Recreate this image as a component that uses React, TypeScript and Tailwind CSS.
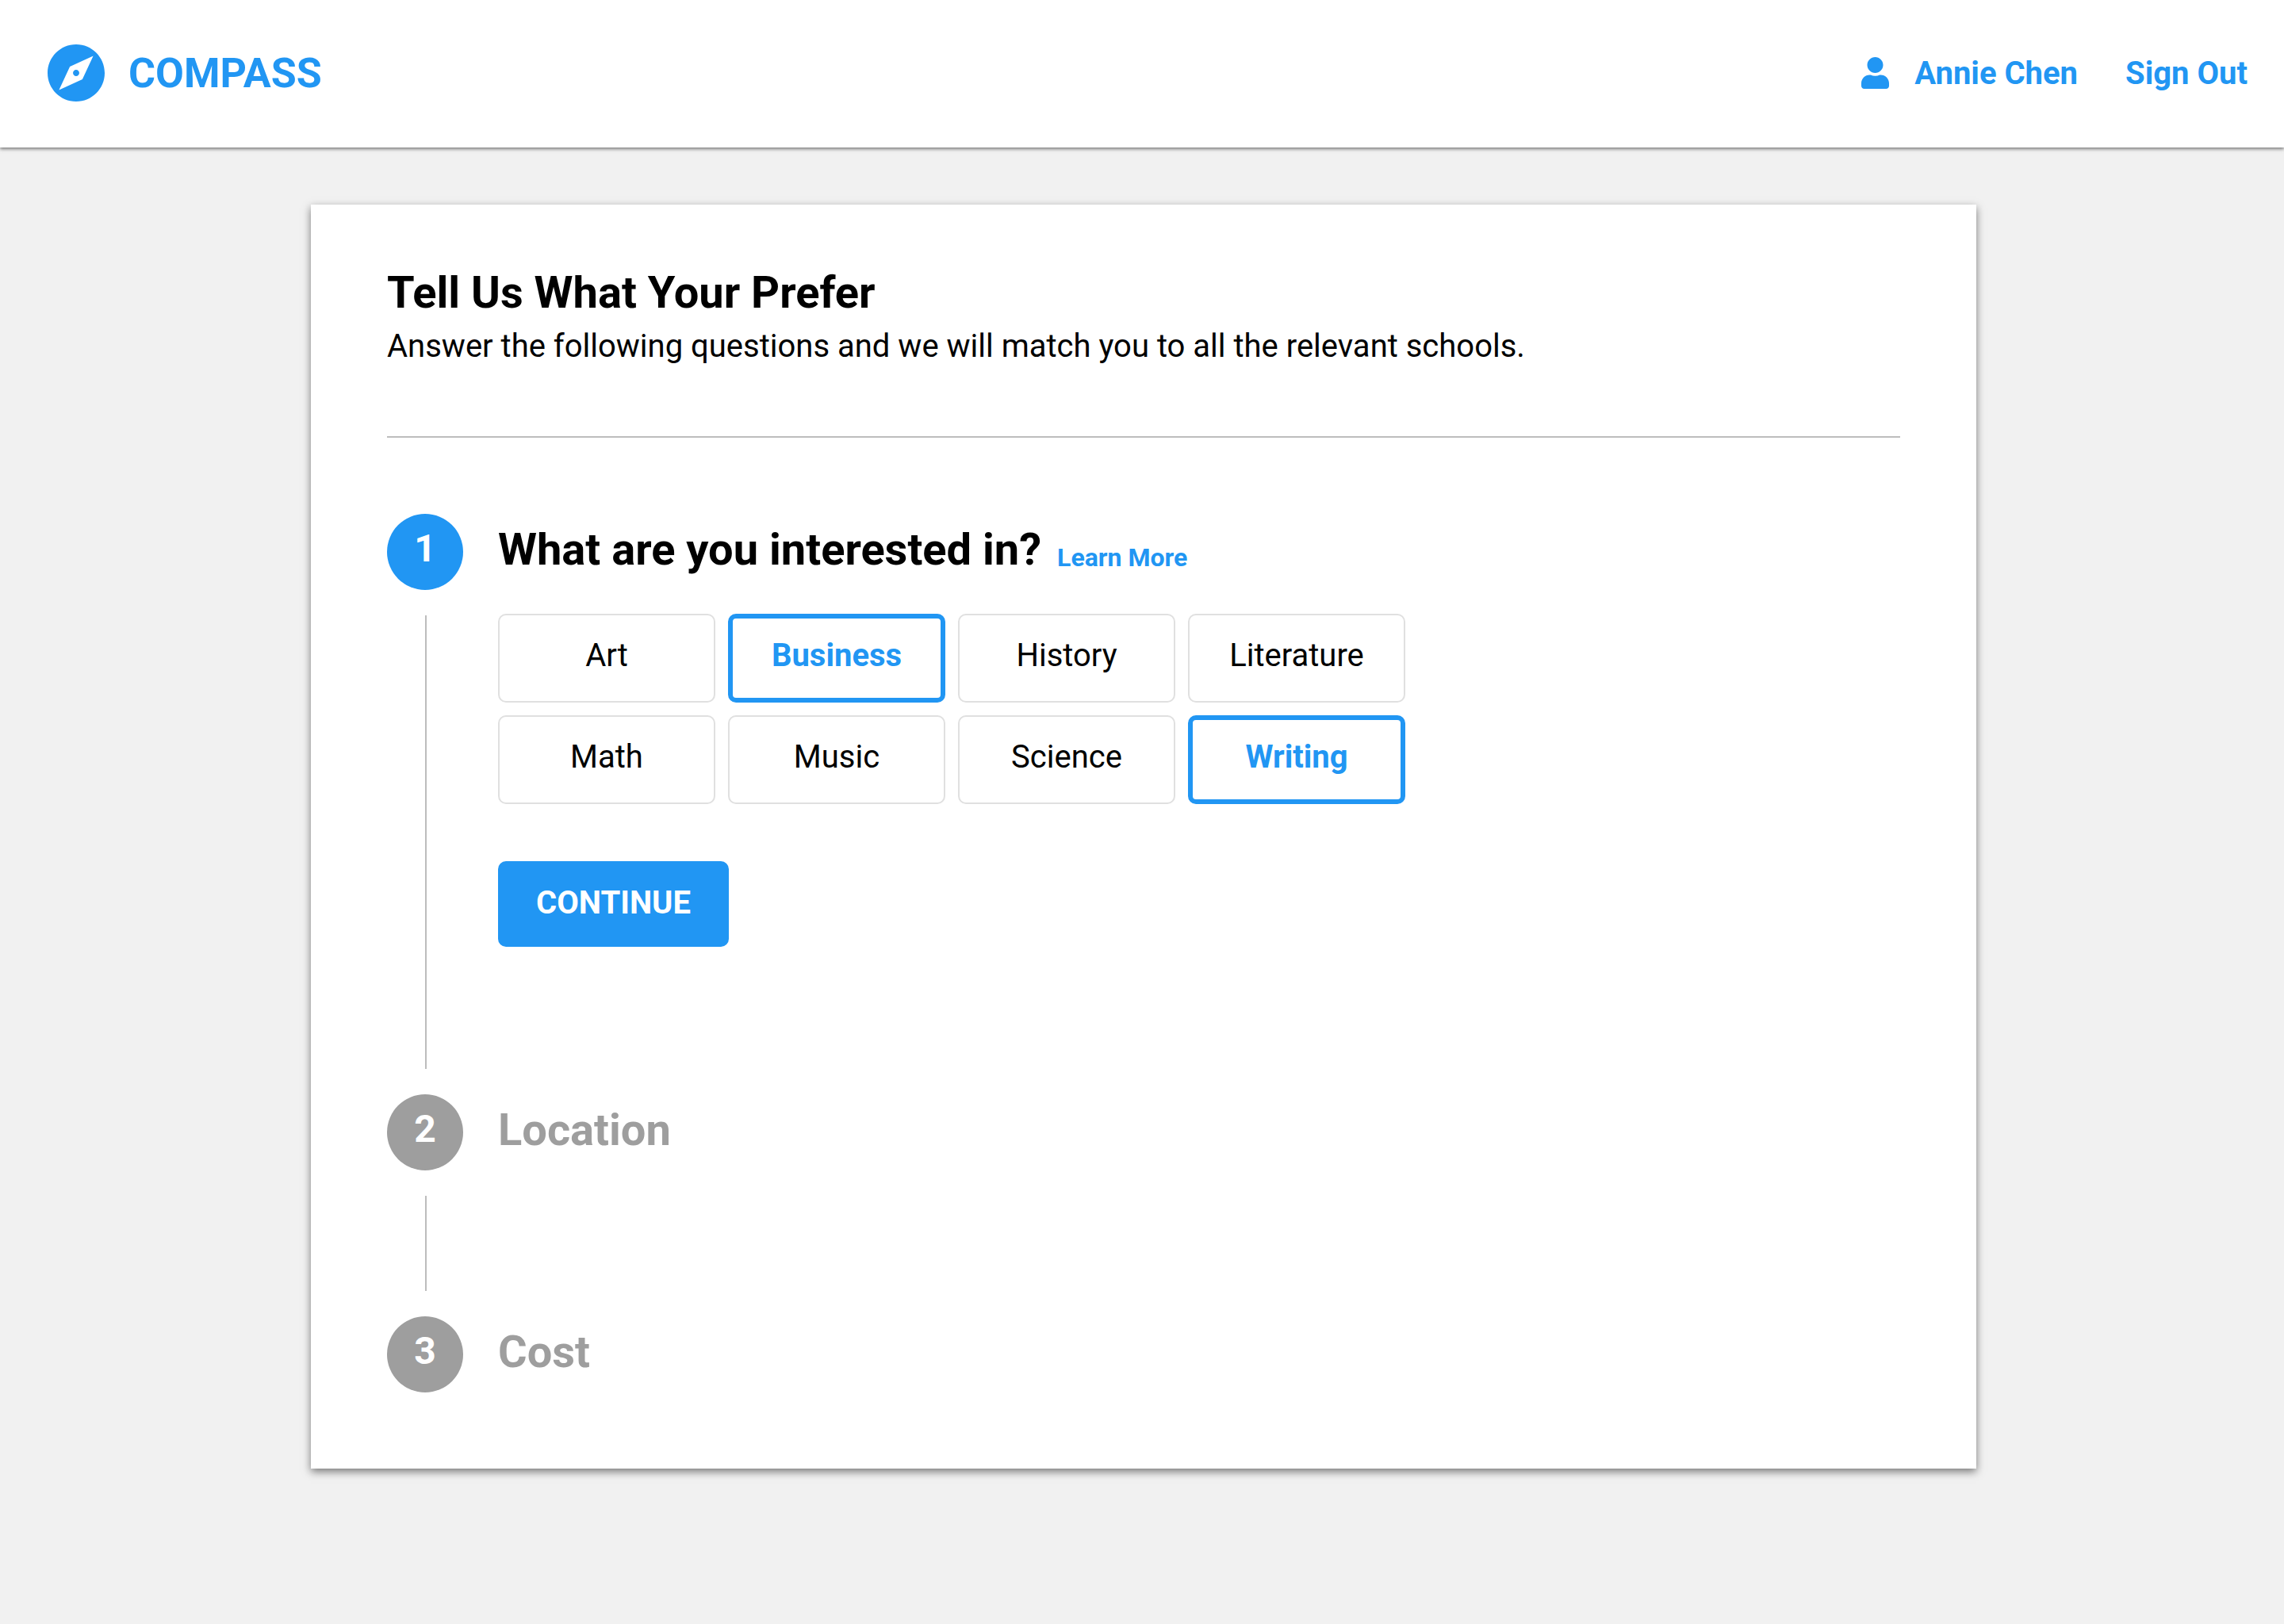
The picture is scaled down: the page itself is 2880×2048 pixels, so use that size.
import { useState, type ReactNode } from "react";
import { FaUser } from "react-icons/fa";
import { MdExplore } from "react-icons/md";

const SUBJECTS = [
  "Art",
  "Business",
  "History",
  "Literature",
  "Math",
  "Music",
  "Science",
  "Writing",
];

function Header() {
  return (
    <header className="flex items-center justify-between bg-white pt-[56px] pr-[46px] pb-[58px] pl-[60px] text-[#2196f3] shadow-[0_2px_4px_rgba(0,0,0,0.5)]">
      <a href="#home" className="flex items-center gap-[30px] text-[52px] leading-[68px] font-bold">
        <MdExplore viewBox="2 2 20 20" className="size-[72px]" aria-hidden="true" />
        <span className="pt-[2px]">COMPASS</span>
      </a>
      <nav className="flex items-center gap-[60px] text-[40px] leading-[68px] font-bold">
        <a href="#account" className="flex items-center gap-[32px]">
          <FaUser className="h-[40px] w-[35px]" aria-hidden="true" />
          <span className="pt-[2px]">Annie Chen</span>
        </a>
        <a href="#sign-out" className="pt-[2px]">
          Sign Out
        </a>
      </nav>
    </header>
  );
}

type StepProps = {
  number: number;
  title: string;
  active?: boolean;
  last?: boolean;
  link?: ReactNode;
  children?: ReactNode;
};

function Step({ number, title, active, last, link, children }: StepProps) {
  return (
    <li className="flex gap-[44px]">
      <div className="flex w-[96px] shrink-0 flex-col items-center">
        <span
          className={`flex size-[96px] items-center justify-center rounded-full pb-2 text-[48px] leading-[56px] font-bold text-white ${
            active ? "bg-[#2196f3]" : "bg-[#9e9e9e]"
          }`}
        >
          {number}
        </span>
        {!last && <span className="my-8 ml-[2px] w-[2px] grow bg-[#bdbdbd]" />}
      </div>
      <div className={last ? "" : active ? "pb-[186px]" : "pb-[184px]"}>
        <div className="flex h-[96px] items-center gap-5 pb-[6px]">
          <h2
            className={`text-[56px] leading-[64px] font-bold ${
              active ? "text-black" : "text-[#9e9e9e]"
            }`}
          >
            {title}
          </h2>
          {link}
        </div>
        {children}
      </div>
    </li>
  );
}

export default function App() {
  const [selected, setSelected] = useState(["Business", "Writing"]);

  const toggle = (subject: string) =>
    setSelected((current) =>
      current.includes(subject)
        ? current.filter((item) => item !== subject)
        : [...current, subject],
    );

  return (
    <div className="min-h-screen bg-[#f1f1f1] font-['Roboto',sans-serif] text-black">
      <Header />
      <main className="pt-[72px] pb-[72px] pl-1">
        <section className="mx-auto max-w-[2100px] bg-white px-[96px] pt-[77px] pb-[96px] shadow-[0_4px_10px_rgba(0,0,0,0.5)]">
          <h1 className="text-[56px] leading-[68px] font-bold">Tell Us What Your Prefer</h1>
          <p className="text-[40px] leading-[68px]">
            Answer the following questions and we will match you to all the relevant schools.
          </p>
          <hr className="mt-[79px] mb-[96px] border-t-2 border-[#bdbdbd]" />
          <ol>
            <Step
              number={1}
              title="What are you interested in?"
              active
              link={
                <a href="#learn-more" className="pt-[20px] text-[32px] leading-[40px] font-bold text-[#2196f3]">
                  Learn More
                </a>
              }
            >
              <div className="mt-[30px] grid grid-cols-[repeat(4,274px)] gap-4">
                {SUBJECTS.map((subject) => {
                  const isOn = selected.includes(subject);
                  return (
                    <button
                      key={subject}
                      type="button"
                      aria-pressed={isOn}
                      onClick={() => toggle(subject)}
                      className={`flex h-[112px] items-center justify-center rounded-[10px] pb-[6px] text-[40px] leading-[48px] ${
                        isOn
                          ? "border-6 border-[#2196f3] font-bold text-[#2196f3]"
                          : "border-2 border-[#e0e0e0]"
                      }`}
                    >
                      {subject}
                    </button>
                  );
                })}
              </div>
              <button
                type="button"
                className="mt-[72px] h-[108px] rounded-[10px] bg-[#2196f3] px-[48px] pb-[2px] text-[40px] leading-[48px] font-bold text-white"
              >
                CONTINUE
              </button>
            </Step>
            <Step number={2} title="Location" />
            <Step number={3} title="Cost" last />
          </ol>
        </section>
      </main>
    </div>
  );
}
